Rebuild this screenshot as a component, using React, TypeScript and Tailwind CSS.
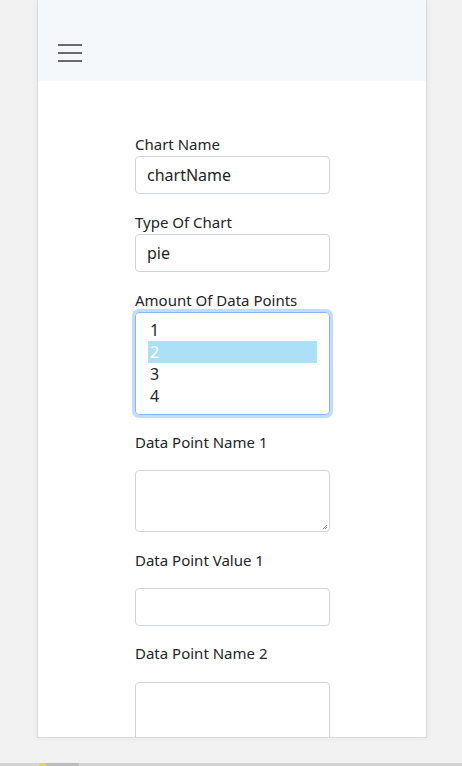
import React from "react";

const font = { fontFamily: '"Noto Sans", "Open Sans", sans-serif' };

function Label({ children }: { children: React.ReactNode }) {
  return <div className="text-[15px] leading-[22px] text-[#212529]">{children}</div>;
}

export default function App() {
  return (
    <div className="min-h-[766px] h-[766px] bg-[#f2f2f2] flex flex-col overflow-hidden" style={font}>
      <div className="ml-[37px] w-[390px] h-[738px] bg-white border-x border-b border-[#dcdcdc] shadow-[0_0_6px_rgba(0,0,0,0.06)] overflow-hidden flex flex-col shrink-0">
        <div className="h-[81px] bg-[#f5f8fa] flex items-start pt-[44px] pl-[20px] shrink-0">
          <div className="flex flex-col gap-[6px] w-[24px]">
            <div className="h-[2px] bg-[#6b6b6b]" />
            <div className="h-[2px] bg-[#6b6b6b]" />
            <div className="h-[2px] bg-[#6b6b6b]" />
          </div>
        </div>
        <div className="pl-[97px] pt-[52px] flex flex-col w-[293px]">
          <Label>Chart Name</Label>
          <div className="mt-[1px] h-[38px] w-[195px] border border-[#ced4da] rounded-[4px] px-[11px] flex items-center text-[16px] text-[#212529]">chartName</div>

          <div className="mt-[17px]"><Label>Type Of Chart</Label></div>
          <div className="mt-[1px] h-[38px] w-[195px] border border-[#ced4da] rounded-[4px] px-[11px] flex items-center text-[16px] text-[#212529]">pie</div>

          <div className="mt-[17px]"><Label>Amount Of Data Points</Label></div>
          <div className="mt-[1px] h-[103px] w-[195px] border border-[#86b7fe] rounded-[4px] shadow-[0_0_0_3px_rgba(13,110,253,0.25)] pt-[6px] pl-[12px] pr-[12px] text-[16px] text-[#212529]">
            <div className="h-[22px] leading-[22px] px-[2px]">1</div>
            <div className="h-[22px] leading-[22px] px-[2px] bg-[#ace0f6] text-white">2</div>
            <div className="h-[22px] leading-[22px] px-[2px]">3</div>
            <div className="h-[22px] leading-[22px] px-[2px]">4</div>
          </div>

          <div className="mt-[16px]"><Label>Data Point Name 1</Label></div>
          <div className="mt-[17px] h-[62px] w-[195px] border border-[#ced4da] rounded-[4px] relative">
            <svg className="absolute right-[1px] bottom-[1px]" width="6" height="6" viewBox="0 0 6 6">
              <path d="M5 1 L1 5 M5 3 L3 5" stroke="#888" strokeWidth="1" />
            </svg>
          </div>

          <div className="mt-[17px]"><Label>Data Point Value 1</Label></div>
          <div className="mt-[17px] h-[38px] w-[195px] border border-[#ced4da] rounded-[4px]" />

          <div className="mt-[16px]"><Label>Data Point Name 2</Label></div>
          <div className="mt-[18px] h-[62px] w-[195px] border border-[#ced4da] rounded-[4px] shrink-0" />
        </div>
      </div>
      <div className="flex-1" />
      <div className="h-[3px] bg-[#d4d4d4] flex shrink-0">
        <div className="ml-[39px] w-[7px] bg-[#d8d27a]" />
        <div className="w-[33px] bg-[#bdbdbd]" />
      </div>
    </div>
  );
}
